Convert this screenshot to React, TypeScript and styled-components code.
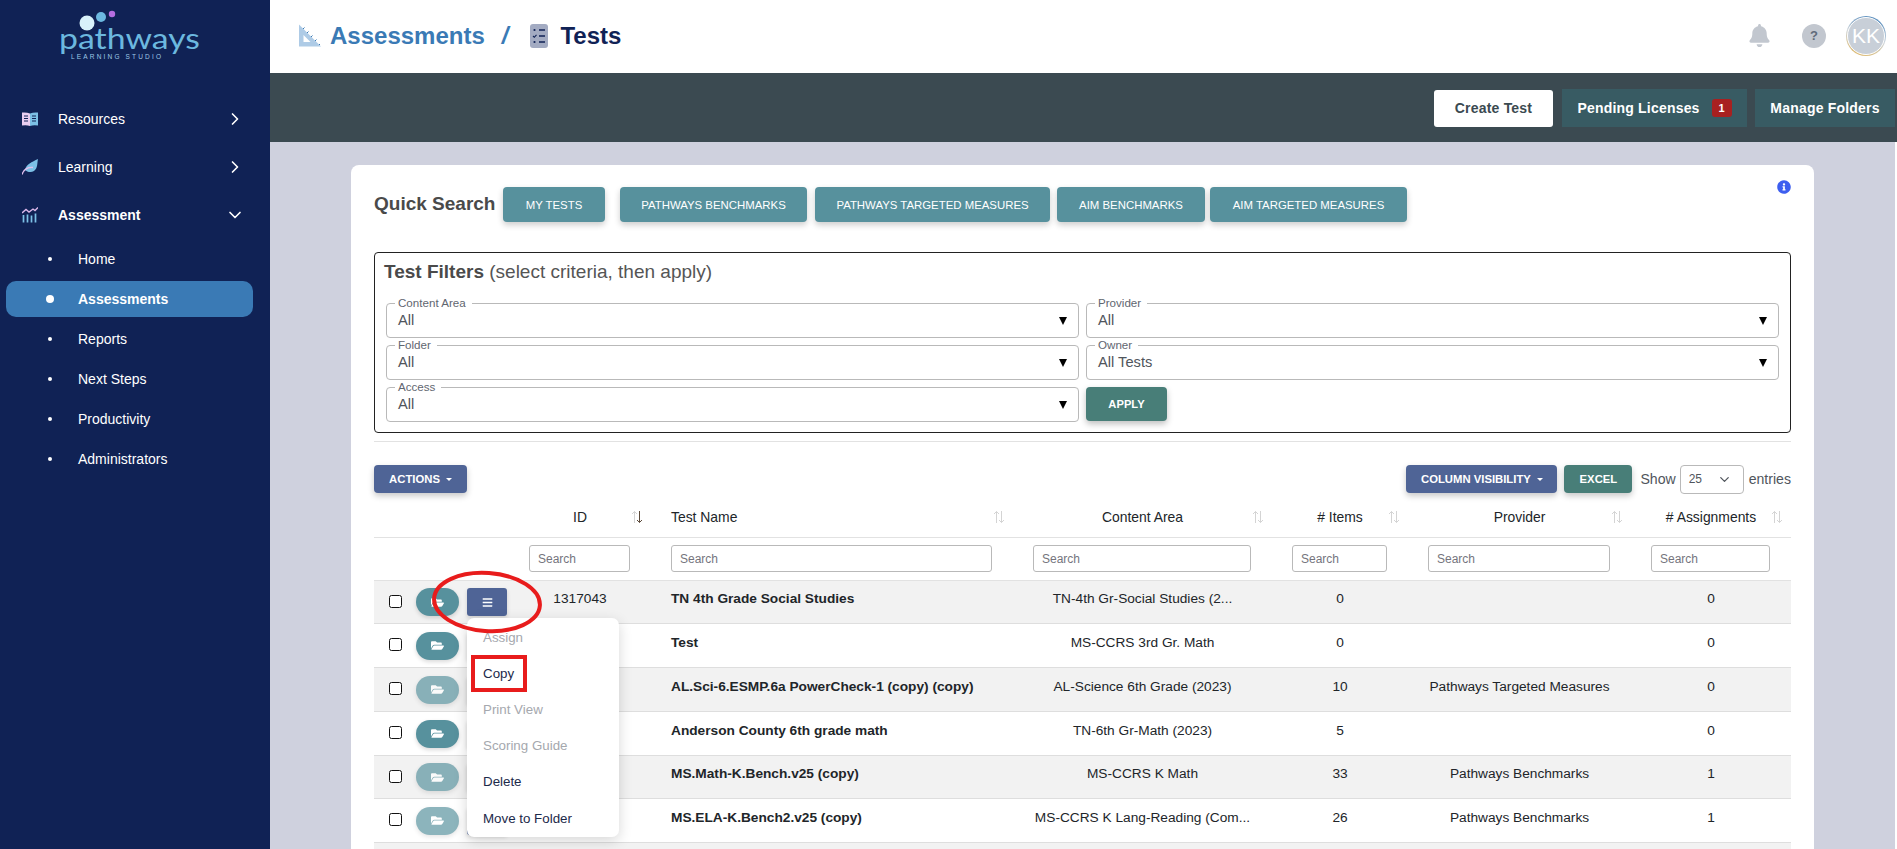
import React from "react";
import styled, { createGlobalStyle, css } from "styled-components";
import { FaBell, FaInfoCircle, FaFolderOpen, FaBars } from "react-icons/fa";
import { LuChevronRight, LuChevronDown } from "react-icons/lu";

const Global = createGlobalStyle`
  html, body { margin: 0; padding: 0; height: 849px; overflow: hidden; background: #fff; }
  body { font-family: "Liberation Sans", Arial, sans-serif; }
  * { box-sizing: border-box; }
`;

const Shell = styled.div`
  display: flex;
  width: 1897px;
  height: 849px;
  overflow: hidden;
`;

const Sidebar = styled.aside`
  flex: 0 0 270px;
  height: 849px;
  background: #102255;
  color: #fff;
`;

const LogoWrap = styled.div`
  height: 95px;
  display: block;
  svg { display: block; }
`;

const NavRow = styled.div<{ $bold?: boolean }>`
  height: 48px;
  display: flex;
  align-items: center;
  padding-left: 22px;
  padding-right: 25px;
  font-size: 14px;
  font-weight: ${(p) => (p.$bold ? 700 : 400)};
  svg.chev { color: #fff; margin-left: auto; }
`;

const NavIcon = styled.span`
  width: 36px;
  display: flex;
  align-items: center;
`;

const SubList = styled.div`
  display: flex;
  flex-direction: column;
  gap: 4px;
  padding-top: 2px;
`;

const SubRow = styled.div<{ $active?: boolean }>`
  height: 36px;
  margin: 0 17px 0 6px;
  border-radius: 10px;
  display: flex;
  align-items: center;
  padding-left: 42px;
  font-size: 14px;
  font-weight: ${(p) => (p.$active ? 700 : 400)};
  background: ${(p) => (p.$active ? "#3a7ab5" : "transparent")};
`;

const Bullet = styled.span<{ $active?: boolean }>`
  width: ${(p) => (p.$active ? 8 : 4)}px;
  height: ${(p) => (p.$active ? 8 : 4)}px;
  margin-left: ${(p) => (p.$active ? -2 : 0)}px;
  margin-right: ${(p) => (p.$active ? 24 : 26)}px;
  border-radius: 50%;
  background: #fff;
`;

const Main = styled.main`
  flex: 1;
  min-width: 0;
  display: flex;
  flex-direction: column;
`;

const TopBar = styled.header`
  height: 73px;
  display: flex;
  align-items: center;
  padding-left: 28px;
  padding-right: 11px;
  padding-bottom: 2px;
  background: #fff;
`;

const Crumb = styled.span<{ $current?: boolean }>`
  font-size: 24px;
  font-weight: 700;
  color: ${(p) => (p.$current ? "#102255" : "#3a7ab5")};
`;

const CrumbSep = styled.span`
  font-size: 24px;
  font-weight: 700;
  font-style: italic;
  color: #3a7ab5;
  margin: 0 22px 0 17px;
`;

const CrumbIcon = styled.span<{ $gap: number }>`
  display: flex;
  margin-right: ${(p) => p.$gap}px;
`;

const TopIcons = styled.div`
  margin-left: auto;
  display: flex;
  align-items: center;
  color: #c2c7cf;
`;

const HelpDot = styled.span`
  width: 24px;
  height: 24px;
  margin-left: 31px;
  border-radius: 50%;
  background: #c2c7cf;
  color: #5f6b7a;
  font-size: 13px;
  font-weight: 700;
  display: flex;
  align-items: center;
  justify-content: center;
`;

const Avatar = styled.div`
  width: 40px;
  height: 40px;
  margin-left: 20px;
  border-radius: 50%;
  padding: 1px;
  background: linear-gradient(20deg, #e0b45a, #cfd6dc 50%, #3a7ab5);
  span {
    display: flex;
    width: 100%;
    height: 100%;
    border-radius: 50%;
    background: #c8cfd8;
    color: #fff;
    font-size: 21px;
    align-items: center;
    justify-content: center;
    border: 1px solid #fff;
  }
`;

const ActionBar = styled.div`
  height: 69px;
  background: #3b4a51;
  display: flex;
  align-items: center;
  justify-content: flex-end;
  padding-right: 2px;
`;

const barBtn = css`
  height: 38px;
  display: flex;
  align-items: center;
  justify-content: center;
  font-size: 14px;
  font-weight: 700;
  letter-spacing: 0.2px;
  border: 0;
  font-family: inherit;
`;

const CreateBtn = styled.button`
  ${barBtn}
  width: 119px;
  height: 37px;
  margin-right: 9px;
  margin-top: 1px;
  background: #fff;
  color: #3b4a51;
  border-radius: 3px;
`;

const TealBarBtn = styled.button<{ $w: number; $first?: boolean }>`
  ${barBtn}
  width: ${(p) => p.$w}px;
  background: #385b63;
  color: #fff;
  margin-left: ${(p) => (p.$first ? 0 : 8)}px;
`;

const Badge = styled.span`
  width: 20px;
  height: 18px;
  margin-left: 12px;
  background: #a82020;
  border-radius: 3px;
  font-size: 11px;
  display: flex;
  align-items: center;
  justify-content: center;
`;

const Content = styled.div`
  flex: 1;
  min-height: 0;
  margin-right: 2px;
  background: #cfd1de;
  padding: 23px 81px 0;
  overflow: hidden;
`;

const Card = styled.section`
  position: relative;
  background: #fff;
  border-radius: 8px 8px 0 0;
  padding: 22px 23px 0;
`;

const InfoDot = styled.span`
  position: absolute;
  top: 15px;
  right: 23px;
  color: #3d5eef;
  display: flex;
`;

const QuickRow = styled.div`
  display: flex;
  align-items: center;
  height: 35px;
`;

const QuickLabel = styled.span`
  font-size: 19px;
  font-weight: 700;
  color: #4a4a4a;
  width: 129px;
  padding-bottom: 2px;
  white-space: nowrap;
`;

const QuickBtn = styled.button<{ $w: number; $gap: number }>`
  width: ${(p) => p.$w}px;
  height: 35px;
  margin-right: ${(p) => p.$gap}px;
  border: 0;
  border-radius: 4px;
  background: #57919d;
  color: #fff;
  font-family: inherit;
  font-size: 11.4px;
  box-shadow: 0 3px 6px rgba(0, 0, 0, 0.2);
`;

const FilterBox = styled.div`
  margin-top: 30px;
  border: 1px solid #222;
  border-radius: 4px;
  padding: 8px 11px 9px;
  height: 181px;
`;

const FilterTitle = styled.div`
  font-size: 19px;
  line-height: 21px;
  color: #555;
  margin: 0 0 14px -2px;
  b { color: #4a4a4a; }
`;

const FilterGrid = styled.div`
  display: grid;
  grid-template-columns: 693px 693px;
  column-gap: 7px;
  grid-auto-rows: 42px;
`;

const Field = styled.fieldset`
  position: relative;
  margin: 0;
  padding: 0 0 0 11px;
  height: 42px;
  border: 1px solid #b9b9b9;
  border-radius: 4px;
  min-width: 0;
`;

const Legend = styled.legend`
  margin-left: -3px;
  padding: 0 6px 0 3px;
  font-size: 11.6px;
  line-height: 14px;
  color: #5f6670;
`;

const FieldValue = styled.div`
  font-size: 14.67px;
  line-height: 20px;
  color: #50555c;
`;

const Caret = styled.span`
  position: absolute;
  right: 11px;
  top: 7px;
  width: 0;
  height: 0;
  border-left: 4px solid transparent;
  border-right: 4px solid transparent;
  border-top: 8px solid #000;
`;

const ApplyBtn = styled.button`
  align-self: end;
  width: 81px;
  height: 34px;
  margin-bottom: 1px;
  border: 0;
  border-radius: 4px;
  background: #487e78;
  color: #fff;
  font-family: inherit;
  font-size: 11.2px;
  font-weight: 700;
  box-shadow: 0 3px 6px rgba(0, 0, 0, 0.25);
`;

const Divider = styled.hr`
  margin: 8px 0 23px;
  border: 0;
  border-top: 1px solid #e2e2e2;
`;

const Toolbar = styled.div`
  display: flex;
  align-items: center;
  height: 28px;
`;

const ToolBtn = styled.button<{ $w: number; $green?: boolean }>`
  width: ${(p) => p.$w}px;
  height: 28px;
  border: 0;
  border-radius: 4px;
  background: ${(p) => (p.$green ? "#487e78" : "#4f6496")};
  color: #fff;
  font-family: inherit;
  font-size: 11.3px;
  font-weight: 700;
  margin-right: 7px;
  box-shadow: 0 3px 6px rgba(0, 0, 0, 0.22);
  display: flex;
  align-items: center;
  justify-content: center;
`;

const TriDown = styled.span`
  margin-left: 6px;
  width: 0;
  height: 0;
  border-left: 3px solid transparent;
  border-right: 3px solid transparent;
  border-top: 3px solid #fff;
`;

const Spacer = styled.div`
  flex: 1;
`;

const ShowText = styled.span`
  font-size: 14.1px;
  color: #50555c;
  margin-left: 1px;
  white-space: nowrap;
`;

const ShowSelect = styled.div`
  width: 64px;
  height: 29px;
  margin: 0 4px;
  border: 1px solid #b9b9b9;
  border-radius: 4px;
  display: flex;
  align-items: center;
  justify-content: space-between;
  padding: 0 11px 0 8px;
  font-size: 12px;
  color: #50555c;
`;

const Table = styled.table`
  width: 1417px;
  table-layout: fixed;
  border-collapse: collapse;
  margin-top: 4px;
`;

const Th = styled.th<{ $left?: boolean }>`
  position: relative;
  height: 40px;
  padding: 0 20px;
  font-size: 13.9px;
  font-weight: 400;
  color: #212529;
  text-align: ${(p) => (p.$left ? "left" : "center")};
  border-bottom: 1px solid #e2e2e2;
`;

const SortMark = styled.span`
  position: absolute;
  right: 8px;
  top: 13px;
  display: flex;
`;

const SearchCell = styled.td`
  height: 43px;
  padding: 0 21px 0 20px;
  border-bottom: 1px solid #e2e2e2;
`;

const SearchBox = styled.input`
  display: block;
  width: 100%;
  height: 27px;
  padding: 0 8px;
  border: 1px solid #b9b9b9;
  border-radius: 3px;
  font-family: inherit;
  font-size: 12px;
  &::placeholder { color: #75757d; opacity: 1; }
`;

const Row = styled.tr<{ $odd: boolean }>`
  background: ${(p) => (p.$odd ? "#f2f2f2" : "#fff")};
`;

const Td = styled.td<{ $left?: boolean; $bold?: boolean; $h: number }>`
  height: ${(p) => p.$h}px;
  padding: ${(p) => p.$h - 33}px 20px 0;
  vertical-align: top;
  font-size: 13.7px;
  line-height: 16px;
  color: #212529;
  font-weight: ${(p) => (p.$bold ? 700 : 400)};
  text-align: ${(p) => (p.$left ? "left" : "center")};
  border-bottom: 1px solid #dedede;
  white-space: nowrap;
`;

const ActionCell = styled.td<{ $h: number }>`
  height: ${(p) => p.$h}px;
  padding: 0;
  border-bottom: 1px solid #dedede;
`;

const ActionWrap = styled.div`
  position: relative;
  display: flex;
  align-items: center;
  padding-left: 15px;
  padding-top: 1px;
`;

const Check = styled.span`
  width: 13px;
  height: 13px;
  margin: -2px 14px 0 0;
  border: 1px solid #111;
  border-radius: 2.5px;
  background: #fff;
`;

const FolderPill = styled.span<{ $dim?: boolean }>`
  width: 43px;
  height: 28px;
  border-radius: 14px;
  background: #57919d;
  color: #fff;
  opacity: ${(p) => (p.$dim ? 0.68 : 1)};
  display: flex;
  align-items: center;
  justify-content: center;
  margin-right: 8px;
  box-shadow: 0 2px 4px rgba(0, 0, 0, 0.15);
`;

const MenuBtn = styled.span`
  width: 40px;
  height: 28px;
  border-radius: 3px;
  background: #4f6496;
  color: #fff;
  display: flex;
  align-items: center;
  justify-content: center;
  box-shadow: 0 2px 4px rgba(0, 0, 0, 0.15);
`;

const Menu = styled.div`
  position: absolute;
  z-index: 3;
  left: 93px;
  top: 31px;
  width: 152px;
  height: 219px;
  padding-top: 1px;
  background: #fff;
  border-radius: 7px;
  box-shadow: 0 4px 14px rgba(0, 0, 0, 0.16);
`;

const MenuItem = styled.div<{ $off?: boolean }>`
  height: 36.2px;
  padding-left: 16px;
  display: flex;
  align-items: center;
  font-size: 13.33px;
  color: ${(p) => (p.$off ? "#a5a8ae" : "#1c2a4a")};
`;

const CopyMark = styled.span`
  position: absolute;
  z-index: 4;
  left: 97px;
  top: 68px;
  width: 56px;
  height: 37px;
  border: 4px solid #e81c1c;
`;

const RingMark = styled.svg`
  position: absolute;
  z-index: 4;
  left: 56px;
  top: -18px;
  pointer-events: none;
`;

const Logo = () => (
  <svg width="270" height="95" viewBox="0 0 270 95">
    <circle cx="87" cy="23" r="7.5" fill="#d8f1fa" />
    <circle cx="101" cy="17" r="5" fill="#6cb8e0" />
    <circle cx="112" cy="14" r="3.2" fill="#b56ee0" />
    <text x="59" y="49" fontFamily="Lato, sans-serif" fontWeight="400" fontSize="29" fill="#6cb8df" textLength="141" lengthAdjust="spacingAndGlyphs">pathways</text>
    <text x="71" y="59" fontFamily="'Liberation Sans', sans-serif" fontSize="6.5" fill="#9fc9e6" textLength="90">LEARNING STUDIO</text>
  </svg>
);

const BookIcon = () => (
  <svg width="16" height="16" viewBox="0 0 16 16">
    <path d="M0 1.5 Q4.5 1 8 2.5 V15 Q4.5 13.6 0 14.5Z" fill="#e8cdf0" />
    <path d="M16 1.5 Q11.5 1 8 2.5 V15 Q11.5 13.6 16 14.5Z" fill="#7cc0e6" />
    <path d="M2 5h4M2 7.5h4M2 10h4M10 5h4M10 7.5h4M10 10h4" stroke="#102255" strokeWidth="1" />
  </svg>
);

const LeafIcon = () => (
  <svg width="16" height="16" viewBox="0 0 16 16">
    <path d="M16 0 C15 4 16 9 12 12 C9 14 5 13 3 11 C4 5 10 3 16 0Z" fill="#7cc0e6" />
    <path d="M0 15.5 C2 10 6 8 11 8.5" stroke="#e2c0ee" strokeWidth="1.4" fill="none" />
  </svg>
);

const ChartIcon = () => (
  <svg width="16" height="16" viewBox="0 0 16 16">
    <path d="M0 6 L4 2.5 L7 5 L11 2 L13 3.5 L16 .5" stroke="#dcb8ea" strokeWidth="1.4" fill="none" />
    <path d="M1.5 8v7.5M5.5 7.5v8M9.5 8.5v7M13.5 6.5v9" stroke="#7cc0e6" strokeWidth="1.7" />
  </svg>
);

const RulerIcon = () => (
  <svg width="23" height="23" viewBox="0 0 23 23">
    <path d="M1 0.5 L23 22.5 H1Z M5.5 11 V18 H12.5Z" fill="#aecbe6" fillRule="evenodd" />
    <path d="M5 5l1.5-1.5M9 9l1.5-1.5M13 13l1.5-1.5M17 17l1.5-1.5M21 21l1-1" stroke="#3a7ab5" strokeWidth="1" />
  </svg>
);

const ChecklistIcon = () => (
  <svg width="18" height="24" viewBox="0 0 18 24">
    <rect width="18" height="24" rx="3" fill="#a3abc2" />
    <path d="M9 6h6M9 12h6M9 18h6" stroke="#102255" strokeWidth="1.4" />
    <circle cx="4.5" cy="6" r="1.1" fill="#102255" />
    <path d="M3 12l1.3 1.3L6.5 10.8" stroke="#102255" strokeWidth="1.1" fill="none" />
    <circle cx="4.5" cy="18" r="1.1" fill="#102255" />
  </svg>
);

const SortIcon = ({ active }: { active?: boolean }) => (
  <svg width="12" height="14" viewBox="0 0 12 14" fill="none" strokeWidth="1">
    <path d="M3.5 13V1.5M1 4l2.5-2.5L6 4" stroke="#d4d4d4" />
    <path d="M8.5 1v11.5M6 10l2.5 2.5L11 10" stroke={active ? "#5c4a3a" : "#d4d4d4"} />
  </svg>
);

const columns = [
  { w: 135, label: "", search: false },
  { w: 142, label: "ID", search: true },
  { w: 362, label: "Test Name", left: true, search: true },
  { w: 259, label: "Content Area", search: true },
  { w: 136, label: "# Items", search: true },
  { w: 223, label: "Provider", search: true },
  { w: 160, label: "# Assignments", search: true },
];

const rows = [
  { id: "1317043", name: "TN 4th Grade Social Studies", area: "TN-4th Gr-Social Studies (2...", items: "0", provider: "", assign: "0", dim: false, h: 43 },
  { id: "", name: "Test", area: "MS-CCRS 3rd Gr. Math", items: "0", provider: "", assign: "0", dim: false, h: 44 },
  { id: "", name: "AL.Sci-6.ESMP.6a PowerCheck-1 (copy) (copy)", area: "AL-Science 6th Grade (2023)", items: "10", provider: "Pathways Targeted Measures", assign: "0", dim: true, h: 44 },
  { id: "", name: "Anderson County 6th grade math", area: "TN-6th Gr-Math (2023)", items: "5", provider: "", assign: "0", dim: false, h: 44 },
  { id: "", name: "MS.Math-K.Bench.v25 (copy)", area: "MS-CCRS K Math", items: "33", provider: "Pathways Benchmarks", assign: "1", dim: true, h: 43 },
  { id: "", name: "MS.ELA-K.Bench2.v25 (copy)", area: "MS-CCRS K Lang-Reading (Com...", items: "26", provider: "Pathways Benchmarks", assign: "1", dim: true, h: 44 },
];

const menuItems = [
  { t: "Assign", off: true },
  { t: "Copy" },
  { t: "Print View", off: true },
  { t: "Scoring Guide", off: true },
  { t: "Delete" },
  { t: "Move to Folder" },
];

const quick = [
  { t: "MY TESTS", w: 102, gap: 15 },
  { t: "PATHWAYS BENCHMARKS", w: 187, gap: 8 },
  { t: "PATHWAYS TARGETED MEASURES", w: 235, gap: 7 },
  { t: "AIM BENCHMARKS", w: 148, gap: 5 },
  { t: "AIM TARGETED MEASURES", w: 197, gap: 0 },
];

export default function App() {
  return (
    <Shell>
      <Global />
      <Sidebar>
        <LogoWrap><Logo /></LogoWrap>
        <NavRow><NavIcon><BookIcon /></NavIcon>Resources<LuChevronRight className="chev" size={20} /></NavRow>
        <NavRow><NavIcon><LeafIcon /></NavIcon>Learning<LuChevronRight className="chev" size={20} /></NavRow>
        <NavRow $bold><NavIcon><ChartIcon /></NavIcon>Assessment<LuChevronDown className="chev" size={20} /></NavRow>
        <SubList>
          {["Home", "Assessments", "Reports", "Next Steps", "Productivity", "Administrators"].map((t) => (
            <SubRow key={t} $active={t === "Assessments"}>
              <Bullet $active={t === "Assessments"} />
              {t}
            </SubRow>
          ))}
        </SubList>
      </Sidebar>
      <Main>
        <TopBar>
          <CrumbIcon $gap={9}><RulerIcon /></CrumbIcon>
          <Crumb>Assessments</Crumb>
          <CrumbSep>/</CrumbSep>
          <CrumbIcon $gap={12}><ChecklistIcon /></CrumbIcon>
          <Crumb $current>Tests</Crumb>
          <TopIcons>
            <FaBell size={23} />
            <HelpDot>?</HelpDot>
            <Avatar><span>KK</span></Avatar>
          </TopIcons>
        </TopBar>
        <ActionBar>
          <CreateBtn>Create Test</CreateBtn>
          <TealBarBtn $w={185} $first>Pending Licenses<Badge>1</Badge></TealBarBtn>
          <TealBarBtn $w={140}>Manage Folders</TealBarBtn>
        </ActionBar>
        <Content>
          <Card>
            <InfoDot><FaInfoCircle size={14} /></InfoDot>
            <QuickRow>
              <QuickLabel>Quick Search</QuickLabel>
              {quick.map((q) => (
                <QuickBtn key={q.t} $w={q.w} $gap={q.gap}>{q.t}</QuickBtn>
              ))}
            </QuickRow>
            <FilterBox>
              <FilterTitle><b>Test Filters</b> (select criteria, then apply)</FilterTitle>
              <FilterGrid>
                <Field><Legend>Content Area</Legend><FieldValue>All</FieldValue><Caret /></Field>
                <Field><Legend>Provider</Legend><FieldValue>All</FieldValue><Caret /></Field>
                <Field><Legend>Folder</Legend><FieldValue>All</FieldValue><Caret /></Field>
                <Field><Legend>Owner</Legend><FieldValue>All Tests</FieldValue><Caret /></Field>
                <Field><Legend>Access</Legend><FieldValue>All</FieldValue><Caret /></Field>
                <ApplyBtn>APPLY</ApplyBtn>
              </FilterGrid>
            </FilterBox>
            <Divider />
            <Toolbar>
              <ToolBtn $w={93}>ACTIONS<TriDown /></ToolBtn>
              <Spacer />
              <ToolBtn $w={151}>COLUMN VISIBILITY<TriDown /></ToolBtn>
              <ToolBtn $w={68} $green>EXCEL</ToolBtn>
              <ShowText>Show</ShowText>
              <ShowSelect>25<LuChevronDown size={15} /></ShowSelect>
              <ShowText>entries</ShowText>
            </Toolbar>
            <Table>
              <colgroup>
                {columns.map((c, i) => (
                  <col key={i} width={c.w} />
                ))}
              </colgroup>
              <thead>
                <tr>
                  {columns.map((c, i) => (
                    <Th key={i} $left={c.left}>
                      {c.label}
                      {c.label && <SortMark><SortIcon active={c.label === "ID"} /></SortMark>}
                    </Th>
                  ))}
                </tr>
                <tr>
                  {columns.map((c, i) => (
                    <SearchCell key={i}>
                      {c.search && <SearchBox placeholder="Search" readOnly />}
                    </SearchCell>
                  ))}
                </tr>
              </thead>
              <tbody>
                {rows.map((r, i) => (
                  <Row key={i} $odd={i % 2 === 0}>
                    <ActionCell $h={r.h}>
                      <ActionWrap>
                        <Check />
                        <FolderPill $dim={r.dim}><FaFolderOpen size={13} /></FolderPill>
                        <MenuBtn><FaBars size={11} /></MenuBtn>
                        {i === 0 && (
                          <>
                            <Menu>
                              {menuItems.map((m) => (
                                <MenuItem key={m.t} $off={m.off}>{m.t}</MenuItem>
                              ))}
                            </Menu>
                            <CopyMark />
                            <RingMark width="114" height="66" viewBox="0 0 114 66" fill="none">
                              <ellipse cx="57" cy="33" rx="53" ry="29" transform="rotate(4 57 33)" stroke="#e81c1c" strokeWidth="4" />
                            </RingMark>
                          </>
                        )}
                      </ActionWrap>
                    </ActionCell>
                    <Td $h={r.h}>{r.id}</Td>
                    <Td $h={r.h} $left $bold>{r.name}</Td>
                    <Td $h={r.h}>{r.area}</Td>
                    <Td $h={r.h}>{r.items}</Td>
                    <Td $h={r.h}>{r.provider}</Td>
                    <Td $h={r.h}>{r.assign}</Td>
                  </Row>
                ))}
                <Row $odd>
                  <ActionCell $h={44} colSpan={7} />
                </Row>
              </tbody>
            </Table>
          </Card>
        </Content>
      </Main>
    </Shell>
  );
}
